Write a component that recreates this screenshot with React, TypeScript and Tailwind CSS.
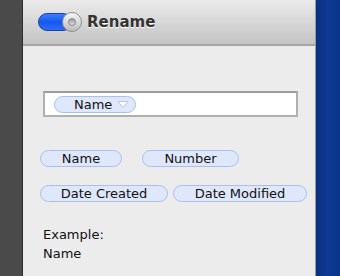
const font = { fontFamily: '"Lucida Grande", "DejaVu Sans", "Liberation Sans", sans-serif' };

function Token({ label, className = "" }: { label: string; className?: string }) {
  return (
    <div
      className={`flex h-[17px] shrink-0 items-center justify-center rounded-full border border-[#a9bff0] bg-[#dfe7fb] text-[13px] leading-none text-[#111] ${className}`}
    >
      {label}
    </div>
  );
}

export default function App() {
  return (
    <div className="flex h-[276px] w-[340px] overflow-hidden" style={font}>
      {/* left desktop strip */}
      <div className="h-full w-[23px] border-r border-[#2e2e2e] bg-[#4a4a4a]" />

      {/* panel */}
      <div className="flex h-full w-[293px] flex-col border-r border-[#9a9a9a] bg-[#ececec]">
        <div className="flex h-[46px] items-center gap-[5px] border-b-2 border-[#a5a5a5] bg-gradient-to-b from-[#ebebeb] to-[#c4c4c4] pl-[15px]">
          {/* toggle */}
          <div className="relative h-[18px] w-[44px]">
            <div className="absolute left-0 top-0 h-[18px] w-[34px] rounded-full border border-[#1a3fa8] bg-gradient-to-b from-[#3d7cf8] via-[#1457f0] to-[#2f6cf6]" />
            <div className="absolute -top-[1px] right-0 flex h-[20px] w-[20px] items-center justify-center rounded-full border border-[#8e8e8e] bg-gradient-to-b from-[#f7f7f7] to-[#bcbcbc]">
              <div className="h-[8px] w-[8px] rounded-full border border-[#888] bg-gradient-to-b from-[#9a9a9a] to-[#e0e0e0]" />
            </div>
          </div>
          <span className="text-[15px] font-bold text-[#333] [text-shadow:0_1px_0_#fff]">Rename</span>
        </div>

        <div className="flex flex-col pl-[20px] pr-[17px]">
          {/* token field */}
          <div className="mt-[45px] flex h-[26px] items-center border-2 border-[#b0b0b0] border-t-[#9c9c9c] bg-white pl-[9px]">
            <div className="flex h-[17px] w-[82px] items-center rounded-full border border-[#a9bff0] bg-[#dfe7fb] pl-[19px] text-[13px] leading-none text-[#111]">
              Name
              <svg width="12" height="9" viewBox="0 0 12 9" className="ml-[5px]">
                <path d="M1 1.5 H11 L6 7.5 Z" fill="#fff" stroke="#b9c8ee" strokeWidth="1" />
              </svg>
            </div>
          </div>

          {/* available tokens */}
          <div className="mt-[33px] flex gap-[20px]">
            <Token label="Name" className="-ml-[3px] w-[82px]" />
            <Token label="Number" className="w-[97px]" />
          </div>
          <div className="mt-[18px] flex gap-[5px]">
            <Token label="Date Created" className="-ml-[3px] w-[128px]" />
            <Token label="Date Modified" className="w-[134px]" />
          </div>

          <div className="mt-[23px] text-[13px] leading-[19px] text-[#111]">
            <div>Example:</div>
            <div>Name</div>
          </div>
        </div>
      </div>

      {/* right desktop strip */}
      <div className="h-full flex-1 bg-gradient-to-r from-[#0a2f80] via-[#0d3a94] to-[#0a3488]" />
    </div>
  );
}
